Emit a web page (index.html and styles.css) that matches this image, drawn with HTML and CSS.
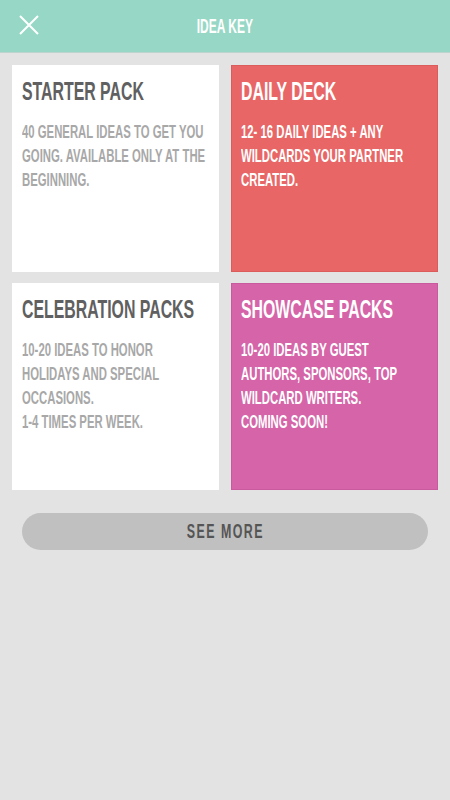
FILE: index.html
```html
<!DOCTYPE html>
<html lang="en">
<head>
    <meta charset="UTF-8">
    <meta name="viewport" content="width=device-width, initial-scale=1.0">
    <title>Idea Key</title>
    <link rel="stylesheet" href="styles.css">
</head>
<body>

    <header class="topbar">
        <button class="close-btn" aria-label="Close">
            <svg width="20" height="20" viewBox="0 0 20 20">
                <path d="M1 1 L19 19 M19 1 L1 19" stroke="#ffffff" stroke-width="2" fill="none"/>
            </svg>
        </button>
        <h1 class="topbar-title"><span class="squeeze">Idea Key</span></h1>
    </header>

    <main class="deck-grid">
        <div class="pack pack-plain">
            <h2 class="pack-title">Starter Pack</h2>
            <p class="pack-desc">40 general ideas to get you<br>going. Available only at the<br>beginning.</p>
        </div>

        <div class="pack pack-daily">
            <h2 class="pack-title">Daily Deck</h2>
            <p class="pack-desc">12- 16 daily ideas + any<br>wildcards your partner<br>created.</p>
        </div>

        <div class="pack pack-plain">
            <h2 class="pack-title">Celebration Packs</h2>
            <p class="pack-desc">10-20 ideas to honor<br>holidays and special<br>occasions.<br>1-4 times per week.</p>
        </div>

        <div class="pack pack-showcase">
            <h2 class="pack-title">Showcase Packs</h2>
            <p class="pack-desc">10-20 ideas by guest<br>authors, sponsors, top<br>wildcard writers.<br>Coming soon!</p>
        </div>
    </main>

    <div class="more-row">
        <button class="see-more"><span class="squeeze">See More</span></button>
    </div>

</body>
</html>
```

FILE: styles.css
```css
body {
    margin: 0;
    background-color: #e3e3e3;
    font-family: 'Liberation Sans', Arial, sans-serif;
    font-weight: bold;
    text-transform: uppercase;
}

/* no condensed headline face available, so the sans gets squeezed */
.squeeze {
    display: inline-block;
    transform: scaleX(0.6);
    transform-origin: center;
}

.topbar {
    position: relative;
    height: 52px;
    background-color: #97d7c5;
    border-bottom: 1px solid #bcd4cd;
    display: flex;
    align-items: center;
    justify-content: center;
}
.close-btn {
    position: absolute;
    left: 19px;
    top: 15px;
    width: 20px;
    height: 20px;
    padding: 0;
    border: none;
    background: none;
    cursor: pointer;
}
.close-btn svg {
    display: block;
}
.topbar-title {
    margin: 0;
    color: #ffffff;
    font-size: 20px;
    line-height: 24px;
    font-weight: bold;
}

.deck-grid {
    display: grid;
    grid-template-columns: 1fr 1fr;
    gap: 11px 12px;
    padding: 12px 12px 0;
}
.pack {
    height: 207px;
    box-sizing: border-box;
    padding: 11px 10px;
    overflow: hidden;
}
.pack-plain {
    background-color: #ffffff;
}
.pack-daily {
    background-color: #e96666;
    border: 1px solid #dc5c5c;
    padding: 10px 9px;
}
.pack-showcase {
    background-color: #d564a8;
    border: 1px solid #c95a9d;
    padding: 10px 9px;
}
.pack-title {
    margin: 0;
    font-size: 26px;
    line-height: 30px;
    color: #606060;
    white-space: nowrap;
    transform: scaleX(0.61);
    transform-origin: left top;
}
.pack-desc {
    margin: 14px 0 0;
    font-size: 18px;
    line-height: 24px;
    color: #a8a8a8;
    white-space: nowrap;
    transform: scaleX(0.63);
    transform-origin: left top;
}
.pack-daily .pack-title,
.pack-daily .pack-desc,
.pack-showcase .pack-title,
.pack-showcase .pack-desc {
    color: #ffffff;
}

.more-row {
    padding: 23px 22px 0;
}
.see-more {
    width: 100%;
    height: 37px;
    border: none;
    border-radius: 19px;
    background-color: #c0c0c0;
    color: #555555;
    font-family: inherit;
    font-size: 20px;
    font-weight: bold;
    letter-spacing: 2.4px;
    text-transform: uppercase;
    cursor: pointer;
}
.see-more .squeeze {
    transform: scaleX(0.62);
}
```
